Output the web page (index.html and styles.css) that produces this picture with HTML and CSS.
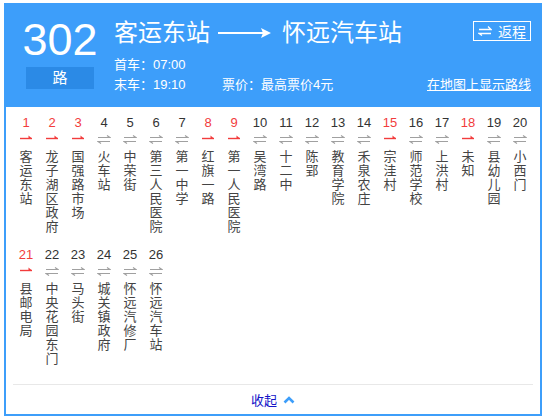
FILE: index.html
```html
<!DOCTYPE html>
<html lang="zh">
<head>
<meta charset="utf-8">
<link rel="stylesheet" href="styles.css">
</head>
<body>
<div class="panel">
  <div class="header">
    <div class="line-no">
      <div class="num">302</div>
      <div class="lu">路</div>
    </div>
    <div class="info">
      <div class="title-row">
        <span class="stop">客运东站</span>
        <svg class="dir-arrow" width="54" height="14" viewBox="0 0 54 14"><line x1="0" y1="7" x2="46" y2="7" stroke="#fff" stroke-width="2"/><polygon points="43,2 53,7 43,12 45,7" fill="#fff"/></svg>
        <span class="stop">怀远汽车站</span>
        <a class="back-btn"><svg width="14" height="10" viewBox="0 0 14 10"><path d="M1 3.5H13L10 0.5" fill="none" stroke="#fff" stroke-width="1.3"/><path d="M13 7.5H1L4 9.5" fill="none" stroke="#fff" stroke-width="1.3"/></svg>返程</a>
      </div>
      <div class="meta">首车：07:00</div>
      <div class="meta meta-row">
        <span class="last">末车：19:10</span>
        <span>票价：最高票价4元</span>
        <a class="map-link">在地图上显示路线</a>
      </div>
    </div>
  </div>
  <div class="body">
    <ul class="stations">
      <li class="st on"><span class="no">1</span><i class="ar"></i><span class="name">客运东站</span></li>
      <li class="st on"><span class="no">2</span><i class="ar"></i><span class="name">龙子湖区政府</span></li>
      <li class="st on"><span class="no">3</span><i class="ar"></i><span class="name">国强路市场</span></li>
      <li class="st"><span class="no">4</span><i class="ar"></i><span class="name">火车站</span></li>
      <li class="st"><span class="no">5</span><i class="ar"></i><span class="name">中荣街</span></li>
      <li class="st"><span class="no">6</span><i class="ar"></i><span class="name">第三人民医院</span></li>
      <li class="st"><span class="no">7</span><i class="ar"></i><span class="name">第一中学</span></li>
      <li class="st on"><span class="no">8</span><i class="ar"></i><span class="name">红旗一路</span></li>
      <li class="st on"><span class="no">9</span><i class="ar"></i><span class="name">第一人民医院</span></li>
      <li class="st"><span class="no">10</span><i class="ar"></i><span class="name">吴湾路</span></li>
      <li class="st"><span class="no">11</span><i class="ar"></i><span class="name">十二中</span></li>
      <li class="st"><span class="no">12</span><i class="ar"></i><span class="name">陈郢</span></li>
      <li class="st"><span class="no">13</span><i class="ar"></i><span class="name">教育学院</span></li>
      <li class="st"><span class="no">14</span><i class="ar"></i><span class="name">禾泉农庄</span></li>
      <li class="st on"><span class="no">15</span><i class="ar"></i><span class="name">宗洼村</span></li>
      <li class="st"><span class="no">16</span><i class="ar"></i><span class="name">师范学校</span></li>
      <li class="st"><span class="no">17</span><i class="ar"></i><span class="name">上洪村</span></li>
      <li class="st on"><span class="no">18</span><i class="ar"></i><span class="name">未知</span></li>
      <li class="st"><span class="no">19</span><i class="ar"></i><span class="name">县幼儿园</span></li>
      <li class="st"><span class="no">20</span><i class="ar"></i><span class="name">小西门</span></li>
      <li class="st on"><span class="no">21</span><i class="ar"></i><span class="name">县邮电局</span></li>
      <li class="st"><span class="no">22</span><i class="ar"></i><span class="name">中央花园东门</span></li>
      <li class="st"><span class="no">23</span><i class="ar"></i><span class="name">马头街</span></li>
      <li class="st"><span class="no">24</span><i class="ar"></i><span class="name">城关镇政府</span></li>
      <li class="st"><span class="no">25</span><i class="ar"></i><span class="name">怀远汽修厂</span></li>
      <li class="st"><span class="no">26</span><i class="ar"></i><span class="name">怀远汽车站</span></li>
    </ul>
    <div class="sep"></div>
    <div class="fold"><a class="fold-link">收起<svg width="12" height="8" viewBox="0 0 12 8"><path d="M1.5 6.5L6 2L10.5 6.5" fill="none" stroke="#3d9efa" stroke-width="2.6"/></svg></a></div>
  </div>
</div>
</body>
</html>
```

FILE: styles.css
```css
* { box-sizing: border-box; }
html, body { margin: 0; padding: 0; background: #fff; }
body {
  font-family: "Liberation Sans", "Noto Sans CJK SC", sans-serif;
  color: #333;
}
.panel {
  margin: 3px 0 0 4px;
  width: 538px;
  height: 413px;
  border: 2px solid #3d9efa;
  display: flex;
  flex-direction: column;
}
.header {
  background: #3d9efa;
  height: 102px;
  display: flex;
  padding: 12px 9px 0 16px;
  color: #fff;
}
.line-no {
  width: 76px;
  display: flex;
  flex-direction: column;
  align-items: center;
}
.num {
  font-size: 45px;
  line-height: 46px;
  height: 46px;
}
.lu {
  margin-top: 4px;
  width: 68px;
  height: 22px;
  background: #2b8ae6;
  font-size: 15px;
  line-height: 22px;
  text-align: center;
}
.info {
  flex: 1;
  margin-left: 16px;
  padding-top: 1.5px;
}
.title-row {
  display: flex;
  align-items: center;
  height: 28px;
}
.stop {
  font-size: 24px;
  line-height: 28px;
}
.dir-arrow {
  margin: 0 10px 0 8px;
}
.back-btn {
  margin-left: auto;
  width: 58px;
  height: 20px;
  border: 1px solid #fff;
  display: flex;
  align-items: center;
  justify-content: center;
  gap: 6px;
  font-size: 14px;
  color: #fff;
  margin-top: -3px;
}
.meta {
  font-size: 13px;
  line-height: 20px;
}
.title-row + .meta { margin-top: 8px; }
.meta-row {
  display: flex;
}
.last { width: 108px; }
.map-link {
  margin-left: auto;
  color: #fff;
  text-decoration: underline;
}
.body {
  flex: 1;
  display: flex;
  flex-direction: column;
}
.stations {
  list-style: none;
  margin: 0;
  padding: 8px 7px 0 7px;
  display: flex;
  flex-wrap: wrap;
}
.st {
  width: 26px;
  height: 132px;
  display: flex;
  flex-direction: column;
  align-items: center;
}
.no {
  font-size: 13px;
  line-height: 15px;
  color: #333;
}
.st.on .no { color: #f23c3c; }
.ar {
  display: block;
  width: 14px;
  height: 14px;
  margin-top: 2px;
  background: url("data:image/svg+xml;utf8,<svg xmlns='http://www.w3.org/2000/svg' width='14' height='14'><path d='M1 5.5H13L10 3.5' fill='none' stroke='%23a0a0a0' stroke-width='1.2'/><path d='M13 9.5H1L4 11.5' fill='none' stroke='%23a0a0a0' stroke-width='1.2'/></svg>") no-repeat;
}
.st.on .ar {
  background: url("data:image/svg+xml;utf8,<svg xmlns='http://www.w3.org/2000/svg' width='14' height='14'><path d='M1 6.5H13' stroke='%23f23c3c' stroke-width='1.4'/><polygon points='9.5,3.5 13,6.5 9.5,6.5' fill='%23f23c3c'/></svg>") no-repeat;
}
.name {
  margin-top: 4px;
  width: 13px;
  font-size: 13px;
  line-height: 14px;
  color: #444;
  word-break: break-all;
  text-align: center;
}
.sep {
  margin: 5px 7px 0;
  height: 1px;
  background: #e8e8e8;
}
.fold {
  flex: 1;
  display: flex;
  align-items: center;
  justify-content: center;
}
.fold-link {
  display: flex;
  align-items: center;
  gap: 6px;
  font-size: 13px;
  color: #1414c8;
}
```
